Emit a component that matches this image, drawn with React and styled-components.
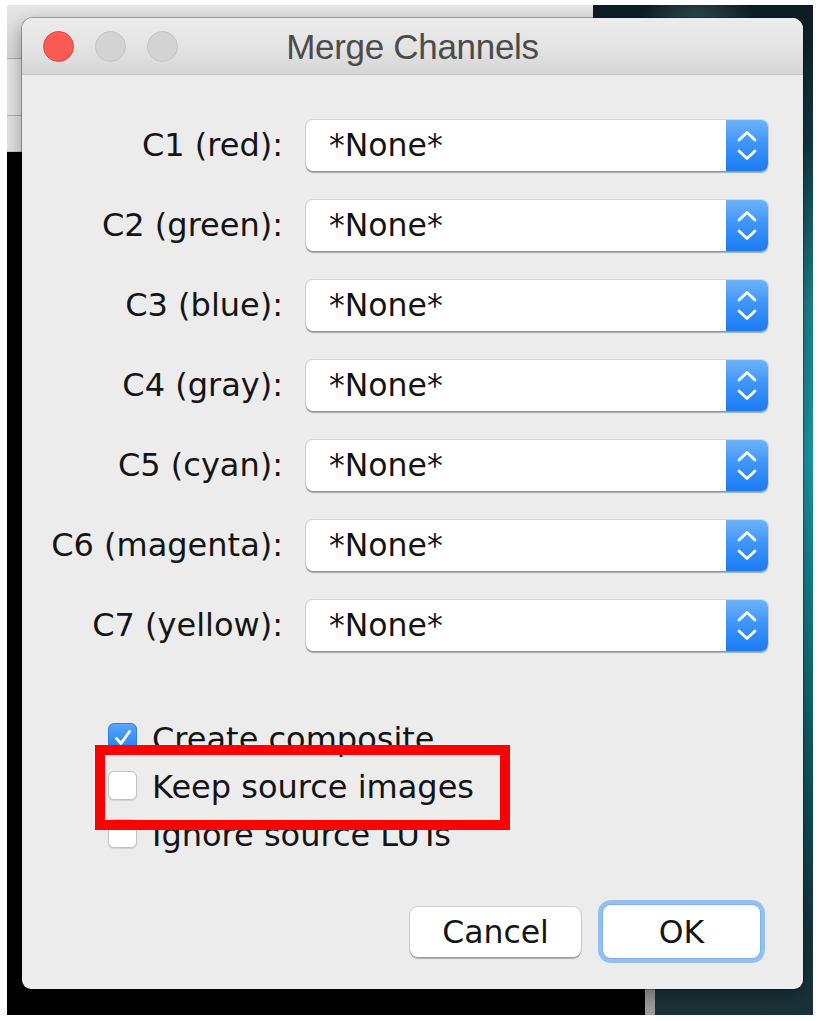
import React from "react";
import styled, { createGlobalStyle } from "styled-components";

const Global = createGlobalStyle`
  html, body { margin: 0; padding: 0; background: #ffffff; }
  body { width: 819px; height: 1021px; overflow: hidden; }
`;

const Page = styled.div`
  padding: 5px 6px 6px 7px;
  width: 819px;
  height: 1021px;
  box-sizing: border-box;
`;

const Desktop = styled.div`
  position: relative;
  width: 806px;
  height: 1010px;
  overflow: hidden;
  background:
    radial-gradient(ellipse 60px 40px at 690px 20px, rgba(120, 170, 175, 0.35), transparent),
    linear-gradient(180deg, #0c1d23 0%, #123a43 14%, #1d8390 30%, #1a9aa6 45%, #137a86 60%, #10515b 78%, #14343c 92%, #1a3239 100%);
`;

const BackWindow = styled.div`
  position: absolute;
  left: 0;
  top: 0;
  width: 648px;
  height: 100%;
  display: flex;
  flex-direction: column;
`;

const BackHeader = styled.div`
  width: 586px;
  height: 147px;
  display: flex;
  flex-direction: column;
  background: #dedede;
`;

const Band = styled.div`
  height: ${(p) => p.$h}px;
  background: ${(p) => p.$bg};
  border-bottom: 1px solid ${(p) => p.$line};
`;

const BackBody = styled.div`
  flex: 1;
  background: #000;
  border-right: 10px solid #9c9c9c;
`;

const Dialog = styled.div`
  position: absolute;
  left: 15px;
  top: 13px;
  width: 781px;
  height: 971px;
  background: #ececec;
  border-radius: 11px 11px 9px 9px;
  display: flex;
  flex-direction: column;
  overflow: hidden;
  box-shadow: 0 0 0 1px rgba(0, 0, 0, 0.28), 0 6px 18px rgba(0, 0, 0, 0.35);
  font-family: "DejaVu Sans", "Open Sans", sans-serif;
  color: #141414;
`;

const TitleBar = styled.div`
  height: 56px;
  flex: none;
  display: grid;
  grid-template-columns: 1fr auto 1fr;
  align-items: center;
  background: linear-gradient(180deg, #ececec 0%, #e4e4e4 50%, #d6d6d6 100%);
  border-bottom: 1px solid #c3c3c3;
`;

const Lights = styled.div`
  display: flex;
  gap: 21px;
  padding-left: 21px;
  padding-top: 1px;
`;

const Light = styled.span`
  width: 31px;
  height: 31px;
  border-radius: 50%;
  box-sizing: border-box;
  background: ${(p) => (p.$close ? "#fc5b54" : "#d3d3d3")};
  border: 1px solid ${(p) => (p.$close ? "#e2453f" : "#c4c4c4")};
`;

const Title = styled.div`
  font-family: "Liberation Sans", Arial, sans-serif;
  font-size: 35px;
  color: #4b4b4b;
  letter-spacing: -0.3px;
  padding-top: 1px;
`;

const Body = styled.div`
  flex: 1;
  display: flex;
  flex-direction: column;
  padding: 45px 35px 31px 22px;
`;

const Form = styled.div`
  display: grid;
  grid-template-columns: 239px 1fr;
  column-gap: 23px;
  row-gap: 29px;
`;

const Label = styled.div`
  text-align: right;
  font-size: 32px;
  line-height: 51px;
  white-space: nowrap;
`;

const Select = styled.div`
  height: 51px;
  display: flex;
  background: #ffffff;
  border-radius: 7px;
  box-shadow: 0 0 0 1px rgba(0, 0, 0, 0.1), 0 1.5px 1px rgba(0, 0, 0, 0.28);
`;

const Value = styled.div`
  flex: 1;
  padding-left: 23px;
  font-size: 31.5px;
  line-height: 51px;
`;

const Stepper = styled.div`
  width: 42px;
  display: flex;
  align-items: center;
  justify-content: center;
  border-radius: 0 7px 7px 0;
  background: linear-gradient(180deg, #6db3fb 0%, #3f95f8 45%, #1a7cf5 100%);
`;

const Options = styled.div`
  position: relative;
  margin: 71px 0 0 64px;
  display: flex;
  flex-direction: column;
  gap: 17px;
`;

const CheckRow = styled.div`
  height: 29px;
  display: flex;
  align-items: center;
  gap: 15px;
  font-size: 32px;
  white-space: nowrap;
  padding-top: 2px;
`;

const Box = styled.span`
  width: 29px;
  height: 29px;
  flex: none;
  box-sizing: border-box;
  border-radius: 6px;
  margin-top: -2px;
  display: flex;
  align-items: center;
  justify-content: center;
  background: ${(p) => (p.$on ? "linear-gradient(180deg, #5aa6fa 0%, #1f7ff5 100%)" : "#ffffff")};
  border: 1px solid ${(p) => (p.$on ? "#2a7fe8" : "#c2c2c2")};
  box-shadow: ${(p) => (p.$on ? "none" : "0 1px 1px rgba(0,0,0,0.12)")};
`;

const Highlight = styled.div`
  position: absolute;
  left: -13px;
  top: 23px;
  width: 415px;
  height: 85px;
  box-sizing: border-box;
  border: 10px solid #ff0000;
  pointer-events: none;
`;

const Buttons = styled.div`
  margin-top: auto;
  display: flex;
  justify-content: flex-end;
  align-items: center;
  gap: 22px;
  padding-right: 8px;
`;

const Button = styled.button`
  height: ${(p) => (p.$default ? 53 : 50)}px;
  width: ${(p) => (p.$default ? 157 : 171)}px;
  font-family: "DejaVu Sans", "Open Sans", sans-serif;
  font-size: 31.5px;
  color: #141414;
  background: #ffffff;
  border: none;
  border-radius: 8px;
  padding: 0;
  box-shadow: ${(p) =>
    p.$default
      ? "0 0 0 1px #7fb0ec, 0 0 0 5px #93bff2"
      : "0 0 0 1px rgba(0,0,0,0.12), 0 1.5px 1px rgba(0,0,0,0.25)"};
`;

const Chevrons = () => (
  <svg width="42" height="51" viewBox="0 0 42 51" fill="none">
    <path d="M13 20 L21 12.5 L29 20" stroke="#fff" strokeWidth="2.8" strokeLinecap="round" strokeLinejoin="round" />
    <path d="M13 31 L21 38.5 L29 31" stroke="#fff" strokeWidth="2.8" strokeLinecap="round" strokeLinejoin="round" />
  </svg>
);

const Check = () => (
  <svg width="22" height="22" viewBox="0 0 22 22" fill="none">
    <path d="M4.5 11.5 L9 16.5 L17.5 4.5" stroke="#fff" strokeWidth="2.8" strokeLinecap="round" strokeLinejoin="round" />
  </svg>
);

const channels = [
  "C1 (red):",
  "C2 (green):",
  "C3 (blue):",
  "C4 (gray):",
  "C5 (cyan):",
  "C6 (magenta):",
  "C7 (yellow):",
];

const options = [
  { label: "Create composite", on: true },
  { label: "Keep source images", on: false },
  { label: "Ignore source LUTs", on: false },
];

export default function App() {
  return (
    <>
      <Global />
      <Page>
        <Desktop>
          <BackWindow>
            <BackHeader>
              <Band $h={53} $bg="linear-gradient(180deg,#e6e6e6,#d4d4d4)" $line="#a8a8a8" />
              <Band $h={57} $bg="#e3e3e3" $line="#b0b0b0" />
              <Band $h={35} $bg="#e1e1e1" $line="#c8c8c8" />
            </BackHeader>
            <BackBody />
          </BackWindow>
          <Dialog>
            <TitleBar>
              <Lights>
                <Light $close />
                <Light />
                <Light />
              </Lights>
              <Title>Merge Channels</Title>
              <div />
            </TitleBar>
            <Body>
              <Form>
                {channels.map((c) => (
                  <React.Fragment key={c}>
                    <Label>{c}</Label>
                    <Select>
                      <Value>*None*</Value>
                      <Stepper>
                        <Chevrons />
                      </Stepper>
                    </Select>
                  </React.Fragment>
                ))}
              </Form>
              <Options>
                {options.map((o) => (
                  <CheckRow key={o.label}>
                    <Box $on={o.on}>{o.on && <Check />}</Box>
                    {o.label}
                  </CheckRow>
                ))}
                <Highlight />
              </Options>
              <Buttons>
                <Button>Cancel</Button>
                <Button $default>OK</Button>
              </Buttons>
            </Body>
          </Dialog>
        </Desktop>
      </Page>
    </>
  );
}
